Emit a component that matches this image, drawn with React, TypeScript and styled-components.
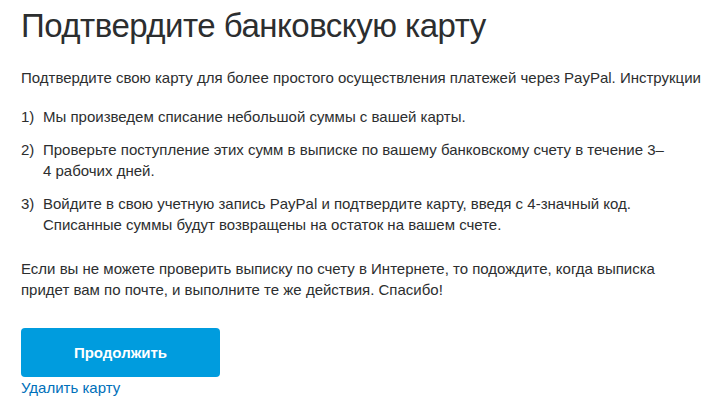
import React from "react";
import styled, { createGlobalStyle } from "styled-components";

const Global = createGlobalStyle`
  html, body { margin: 0; padding: 0; background: #ffffff; }
  body { font-family: "Liberation Sans", Arial, sans-serif; color: #2c2e2f; }
`;

const Page = styled.div`
  padding: 4px 0 0 21px;
  display: flex;
  flex-direction: column;
  align-items: flex-start;
  overflow: hidden;
`;

const Title = styled.h1`
  margin: 0;
  font-size: 33px;
  line-height: 44px;
  font-weight: 400;
  letter-spacing: -0.5px;
  color: #2c2e2f;
`;

const Paragraph = styled.p<{ $top: number }>`
  margin: ${(p) => p.$top}px 0 0;
  font-size: 15px;
  line-height: 21px;
  white-space: nowrap;
`;

const List = styled.ol`
  list-style: none;
  margin: 18px 0 0;
  padding: 0;
  display: flex;
  flex-direction: column;
  gap: 12px;
`;

const Item = styled.li`
  display: grid;
  grid-template-columns: 22px auto;
  font-size: 15px;
  line-height: 21px;
  white-space: nowrap;
`;

const Num = styled.span``;

const Button = styled.button`
  margin-top: 28px;
  width: 199px;
  height: 49px;
  border: none;
  border-radius: 4px;
  background: #009cde;
  color: #ffffff;
  font-family: "Liberation Sans", Arial, sans-serif;
  font-weight: 700;
  font-size: 15px;
  cursor: pointer;
`;

const Link = styled.a`
  margin-top: 1px;
  font-size: 15px;
  line-height: 20px;
  color: #0070ba;
  text-decoration: none;
`;

const items: string[][] = [
  ["Мы произведем списание небольшой суммы с вашей карты."],
  [
    "Проверьте поступление этих сумм в выписке по вашему банковскому счету в течение 3–",
    "4 рабочих дней.",
  ],
  [
    "Войдите в свою учетную запись PayPal и подтвердите карту, введя с 4-значный код.",
    "Списанные суммы будут возвращены на остаток на вашем счете.",
  ],
];

export default function App() {
  return (
    <>
      <Global />
      <Page>
        <Title>Подтвердите банковскую карту</Title>
        <Paragraph $top={19}>
          Подтвердите свою карту для более простого осуществления платежей через PayPal. Инструкции
        </Paragraph>
        <List>
          {items.map((lines, i) => (
            <Item key={i}>
              <Num>{i + 1})</Num>
              <span>
                {lines.map((l, j) => (
                  <React.Fragment key={j}>
                    {j > 0 && <br />}
                    {l}
                  </React.Fragment>
                ))}
              </span>
            </Item>
          ))}
        </List>
        <Paragraph $top={23}>
          Если вы не можете проверить выписку по счету в Интернете, то подождите, когда выписка
          <br />
          придет вам по почте, и выполните те же действия. Спасибо!
        </Paragraph>
        <Button>Продолжить</Button>
        <Link href="#">Удалить карту</Link>
      </Page>
    </>
  );
}
